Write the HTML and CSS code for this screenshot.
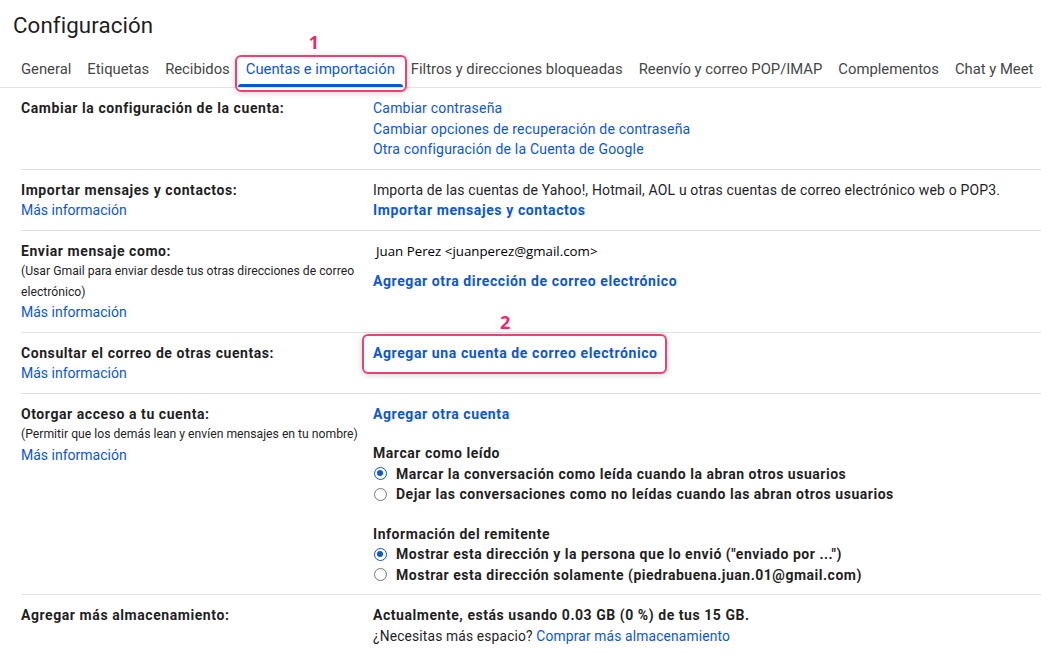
FILE: index.html
```html
<!DOCTYPE html>
<html lang="es">
<head>
<meta charset="utf-8">
<title>Configuración</title>
<link rel="stylesheet" href="styles.css">
</head>
<body>
<div class="page">
  <h1 class="title">Configuración</h1>
  <nav class="tabs">
    <a class="tab">General</a>
    <a class="tab">Etiquetas</a>
    <a class="tab">Recibidos</a>
    <a class="tab active">Cuentas e importación
      <span class="mark mark-tab"></span>
      <span class="num num-1">1</span>
    </a>
    <a class="tab">Filtros y direcciones bloqueadas</a>
    <a class="tab">Reenvío y correo POP/IMAP</a>
    <a class="tab">Complementos</a>
    <a class="tab">Chat y Meet</a>
  </nav>

  <div class="rows">
    <div class="row">
      <div class="label"><b>Cambiar la configuración de la cuenta:</b></div>
      <div class="value">
        <a class="link">Cambiar contraseña</a>
        <a class="link">Cambiar opciones de recuperación de contraseña</a>
        <a class="link">Otra configuración de la Cuenta de Google</a>
      </div>
    </div>

    <div class="row">
      <div class="label"><b>Importar mensajes y contactos:</b>
        <a class="link more">Más información</a></div>
      <div class="value">
        <span class="txt">Importa de las cuentas de Yahoo!, Hotmail, AOL u otras cuentas de correo electrónico web o POP3.</span>
        <a class="link strong">Importar mensajes y contactos</a>
      </div>
    </div>

    <div class="row">
      <div class="label"><b>Enviar mensaje como:</b>
        <span class="sub">(Usar Gmail para enviar desde tus otras direcciones de correo electrónico)</span>
        <a class="link more">Más información</a></div>
      <div class="value">
        <span class="who">Juan Perez &lt;juanperez@gmail.com&gt;</span>
        <a class="link strong gap10">Agregar otra dirección de correo electrónico</a>
      </div>
    </div>

    <div class="row">
      <div class="label"><b>Consultar el correo de otras cuentas:</b>
        <a class="link more">Más información</a></div>
      <div class="value">
        <a class="link strong boxed">Agregar una cuenta de correo electrónico
          <span class="mark mark-link"></span>
          <span class="num num-2">2</span>
        </a>
      </div>
    </div>

    <div class="row">
      <div class="label"><b>Otorgar acceso a tu cuenta:</b>
        <span class="sub">(Permitir que los demás lean y envíen mensajes en tu nombre)</span>
        <a class="link more">Más información</a></div>
      <div class="value">
        <a class="link strong">Agregar otra cuenta</a>
        <span class="head gap19">Marcar como leído</span>
        <label class="opt"><span class="radio on"></span>Marcar la conversación como leída cuando la abran otros usuarios</label>
        <label class="opt"><span class="radio"></span>Dejar las conversaciones como no leídas cuando las abran otros usuarios</label>
        <span class="head gap19">Información del remitente</span>
        <label class="opt"><span class="radio on"></span>Mostrar esta dirección y la persona que lo envió ("enviado por ...")</label>
        <label class="opt"><span class="radio"></span>Mostrar esta dirección solamente (piedrabuena.juan.01@gmail.com)</label>
      </div>
    </div>

    <div class="row last">
      <div class="label"><b>Agregar más almacenamiento:</b></div>
      <div class="value">
        <span class="head">Actualmente, estás usando 0.03 GB (0 %) de tus 15 GB.</span>
        <span class="txt small">¿Necesitas más espacio? <a class="link inl">Comprar más almacenamiento</a></span>
      </div>
    </div>
  </div>
</div>
</body>
</html>
```
FILE: styles.css
```css
* { box-sizing: border-box; }
html, body { margin: 0; padding: 0; background: #fff; }
body {
  font-family: Roboto, "Liberation Sans", Arial, sans-serif;
  color: #1f1f1f;
  font-size: 14px;
  width: 1041px;
  height: 655px;
  overflow: hidden;
}
.page { display: flex; flex-direction: column; }
.title {
  margin: 0;
  padding: 11px 0 0 13px;
  font-weight: 400;
  font-size: 22.3px;
  line-height: 28px;
  color: #1f1f1f;
  letter-spacing: 0.1px;
}
.tabs {
  display: flex;
  margin-top: 17px;
  padding-left: 13px;
  border-bottom: 1px solid #e3e3e3;
  white-space: nowrap;
}
.tab {
  position: relative;
  padding: 0 8px;
  height: 31px;
  line-height: 26px;
  font-size: 14.8px;
  color: #444746;
}
.tab.active { color: #0b57d0; }
.tab.active::after {
  content: "";
  position: absolute;
  left: 0; right: 0; bottom: 0;
  height: 3px;
  background: #0b57d0;
  border-radius: 3px 3px 0 0;
}
.mark {
  position: absolute;
  border: 2px solid #ee3f73;
  border-radius: 6px;
  box-shadow: 0 1px 6px rgba(0,0,0,0.18);
  pointer-events: none;
}
.mark-tab { left: -3px; right: -4px; top: -1px; bottom: -5px; }
.num {
  position: absolute;
  color: #f0286a;
  font-weight: 700;
  font-size: 18px;
  line-height: 20px;
  font-family: "Open Sans", Roboto, sans-serif;
}
.num-1 { left: 71px; top: -24px; }
.num-2 { left: 127px; top: -31px; }

.rows { display: flex; flex-direction: column; padding-left: 21px; }
.row {
  display: grid;
  grid-template-columns: 352px 1fr;
  padding: 10px 0 9px;
  border-bottom: 1px solid #e3e3e3;
  line-height: 20.5px;
}
.row.last { border-bottom: none; }
.label, .value { display: flex; flex-direction: column; align-items: flex-start; }
.label b { font-weight: 700; font-size: 14px; color: #1f1f1f; letter-spacing: 0.57px; }
.sub { font-size: 12.2px; color: #1f1f1f; line-height: 20.5px; padding-right: 4px; }
.link { color: #0b57d0; font-size: 14px; letter-spacing: 0.2px; }
.link.more { letter-spacing: 0; }
.link.strong { font-weight: 700; letter-spacing: 0.6px; }
.link.inl { font-size: inherit; letter-spacing: inherit; }
.txt { font-size: 14px; color: #1f1f1f; letter-spacing: 0.14px; }
.txt.small { font-size: 13.8px; letter-spacing: 0.16px; }
.who { font-family: "Open Sans", sans-serif; font-size: 13.3px; padding-left: 3px; color: #000; }
.gap10 { margin-top: 10px; }
.gap19 { margin-top: 19px; }
.head { font-weight: 700; font-size: 14px; letter-spacing: 0.55px; }
.opt { display: flex; align-items: center; font-weight: 700; font-size: 14px; letter-spacing: 0.52px; }
.radio {
  width: 13px; height: 13px;
  border: 1.5px solid #747775;
  border-radius: 50%;
  margin: 0 9px 0 1px;
  position: relative;
  flex: none;
}
.radio.on { border-color: #0b57d0; }
.radio.on::after {
  content: "";
  position: absolute;
  left: 2px; top: 2px;
  width: 6px; height: 6px;
  border-radius: 50%;
  background: #0b57d0;
}
.boxed { position: relative; }
.mark-link { left: -11px; right: -9px; top: -9px; bottom: -11px; }
```
